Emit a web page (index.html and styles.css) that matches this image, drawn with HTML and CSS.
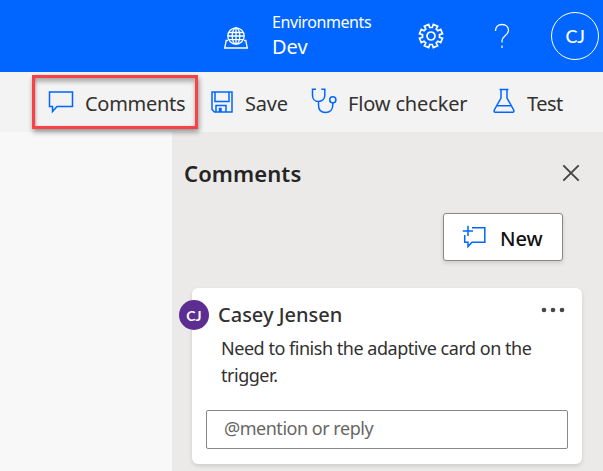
FILE: index.html
```html
<!DOCTYPE html>
<html lang="en">
<head>
<meta charset="utf-8">
<title>Comments</title>
<link rel="stylesheet" href="styles.css">
</head>
<body>
<header class="topbar">
  <svg class="globe" width="24" height="22" viewBox="0 0 24 22"><circle cx="12" cy="9" r="8.2"/><ellipse cx="12" cy="9" rx="3.8" ry="8.2"/><path d="M12 .8v16.4M4.8 5.5h14.4M3.8 9h16.4M4.8 12.7h14.4M4 13.5H2.2L.7 21h22.6l-1.5-7.500H20"/></svg>
  <div class="env"><span class="env-label">Environments</span><span class="env-name">Dev</span></div>
  <svg class="gear" width="26" height="26" viewBox="-13 -13 26 26"><path d="M-2.300 -11.500L-1.300 -8.500H1.300L2.300 -11.500L6.600 -9.700L5.200 -6.900L6.900 -5.200L9.700 -6.600L11.500 -2.300L8.500 -1.300V1.300L11.500 2.300L9.700 6.600L6.900 5.200L5.200 6.900L6.600 9.700L2.300 11.500L1.300 8.500H-1.300L-2.300 11.500L-6.600 9.700L-5.200 6.900L-6.900 5.200L-9.700 6.600L-11.500 2.300L-8.500 1.300V-1.300L-11.500 -2.300L-9.700 -6.600L-6.900 -5.200L-5.200 -6.900L-6.600 -9.700Z"/><circle r="4"/></svg>
  <svg class="help" width="16" height="26" viewBox="0 0 16 26"><path d="M1.500 8C1.500 4 4 1.500 8 1.500S14.500 4 14.500 7.500C14.500 12.500 8 12.500 8 18V19.500M8 22.500V25"/></svg>
  <div class="account">CJ</div>
</header>
<nav class="toolbar">
  <button class="tool tool-active"><svg width="26" height="24" viewBox="0 0 26 24"><path d="M1.500 2H24.500V16.500H9L4.500 21.500V16.500H1.500Z"/></svg><span>Comments</span></button>
  <button class="tool save"><svg width="22" height="22" viewBox="0 0 22 22"><path d="M1 1H21V21H3.500L1 18.500ZM4 1V10.500H18V1M5 21V14.500H15V21M8.500 21V17.500H10V21"/></svg><span>Save</span></button>
  <button class="tool checker"><svg width="26" height="26" viewBox="0 0 26 26"><path d="M5 1.200H1.500V7.500C1.500 11 4 13.500 7.500 13.500S13.800 11 13.800 7.500V1.200H10.300M7.500 13.500V17C7.500 21.500 10 24.500 14.500 24.500S21.800 21.500 21.800 17V15"/><circle cx="21.800" cy="11.800" r="3.100"/></svg><span>Flow checker</span></button>
  <button class="tool test"><svg width="22" height="26" viewBox="0 0 22 26"><path d="M6.500 1.500H15.500M8 1.500V10L1.300 22Q.5 24.300 3 24.300H19Q21.500 24.300 20.700 22L14 10V1.500M4 17.700H18"/></svg><span>Test</span></button>
</nav>
<main class="workspace">
  <aside class="panel">
    <div class="panel-head"><h1>Comments</h1><svg width="18" height="18" viewBox="0 0 18 18"><path d="M1.300 1.300L16.700 16.700M16.700 1.300L1.300 16.700"/></svg></div>
    <button class="new"><svg width="24" height="24" viewBox="0 0 24 24"><path d="M6 .8V11M.8 6H11M10 2.700H22.800V17.200H10L6 21.500V17.200H2.700V10"/></svg><span>New</span></button>
    <article class="card">
      <div class="avatar">CJ</div>
      <div class="card-head"><h2>Casey Jensen</h2><svg width="24" height="6" viewBox="0 0 24 6"><circle cx="3" cy="3" r="2.300"/><circle cx="12" cy="3" r="2.300"/><circle cx="21" cy="3" r="2.300"/></svg></div>
      <p class="message"><span>Need to finish the adaptive card on the</span> <span class="line2">trigger.</span></p>
      <div class="reply">@mention or reply</div>
    </article>
  </aside>
</main>
</body>
</html>
```
FILE: styles.css
```css
* { box-sizing: border-box; }
body { margin: 0; width: 603px; height: 471px; overflow: hidden; font-family: "Noto Sans", "Open Sans", sans-serif; color: #323130; background: #f8f8f8; }
svg { display: block; flex: none; fill: none; stroke: #06f; stroke-width: 1.500; }
h1, h2, p { margin: 0; }
span, h1, h2 { white-space: nowrap; }
button { font: inherit; color: inherit; border: 0; background: none; padding: 0; }
.topbar { height: 72px; background: #06f; color: #fff; display: flex; align-items: center; padding-left: 224px; }
.topbar svg { stroke: #fff; stroke-width: 1.300; }
.globe { margin-top: 4px; }
.env { width: 146px; margin: -2px 0 0 24px; display: flex; flex-direction: column; }
.env-label { font-size: 16px; line-height: 22px; letter-spacing: -.42px; }
.env-name { font-size: 20px; line-height: 27px; letter-spacing: 0; }
.topbar .gear { stroke-width: 1.700; }
.help { margin-left: 50px; }
.account { width: 48px; height: 48px; margin-left: 41px; flex: none; border: 1px solid #fff; border-radius: 50%; display: flex; align-items: center; justify-content: center; font: 500 18px Lato, sans-serif; letter-spacing: -.3px; }
.toolbar { height: 60px; background: #f3f3f3; display: flex; align-items: flex-start; padding: 3px 0 0 32px; }
.tool { height: 54px; display: flex; align-items: center; font-size: 20px; line-height: 28px; flex: none; position: relative; }
.tool span { margin-top: 3px; letter-spacing: -.2px; }
.tool-active { width: 166px; border: 3px solid #fb4145; padding-left: 13px; box-shadow: 1px 3px 5px #0006, inset 0 4px 4px #0004, inset 1px 0 2px #0002; }
.tool-active span { margin-left: 11px; letter-spacing: -.3px; }
.save { width: 101px; margin-left: 13px; }
.save span { margin-left: 12px; }
.checker { width: 181px; }
.checker svg { margin-top: -3px; margin-left: -1px; }
.checker span { margin-left: 11px; letter-spacing: -.15px; }
.test svg { margin-top: -3px; }
.test span { margin-left: 12px; letter-spacing: -.5px; }
.workspace { height: 339px; padding-left: 172px; }
.panel { height: 339px; background: #ebeae8; padding: 26px 20px 0 20px; display: flex; flex-direction: column; }
.panel-head { height: 30px; display: flex; justify-content: space-between; align-items: center; padding-right: 3px; margin-left: -8px; }
.panel-head svg { stroke: #444; stroke-width: 1.900; }
h1 { font-size: 22px; line-height: 30px; font-weight: 600; color: #242424; letter-spacing: .1px; }
.new { width: 120px; height: 48px; margin: 25px 20px 0 auto; padding-left: 18px; display: flex; align-items: center; font-size: 20px; font-weight: 500; color: #111; background: #fff; border: 1px solid #8a8886; border-radius: 3px; box-shadow: 0 2px 4px #0002; }
.new span { margin: 2px 0 0 14px; }
.card { position: relative; width: 390px; height: 176px; margin-top: 27px; padding: 12px 14px 0; background: #fff; border-radius: 6px; box-shadow: 0 2px 4px #0002; }
.avatar { position: absolute; left: -13px; top: 12px; width: 30px; height: 30px; border-radius: 50%; background: #5c2e91; color: #fff; display: flex; align-items: center; justify-content: center; font: 700 14px Lato, sans-serif; }
.card-head { height: 30px; display: flex; justify-content: space-between; padding: 0 3px 0 12px; }
.card-head svg { fill: #484644; stroke: none; margin-top: 7px; }
h2 { font-size: 20px; line-height: 30px; font-weight: 500; }
.message { margin: 4px 0 0 15px; font-size: 18px; line-height: 28px; height: 76px; letter-spacing: -.47px; }
.message span { display: block; }
.message .line2 { margin-top: -1px; }
.reply { width: 362px; height: 39px; border: 1px solid #8a8886; border-radius: 2px; padding-left: 17px; font-size: 18px; line-height: 34px; color: #686664; letter-spacing: -.48px; }
```
